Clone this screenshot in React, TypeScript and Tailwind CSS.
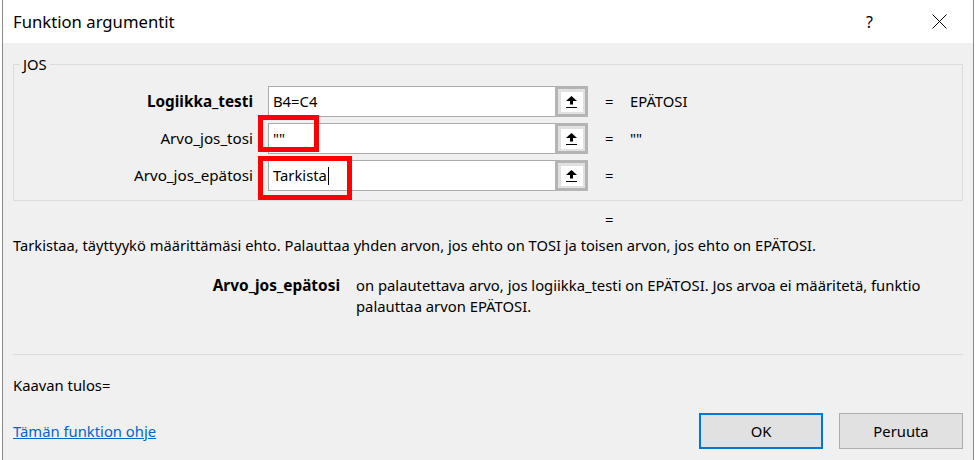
import React from "react";

const RefIcon = () => (
  <svg width="11" height="12" viewBox="0 0 11 12" aria-hidden="true">
    <path d="M5.5 0 L11 5 L0 5 Z" fill="#000" />
    <rect x="4" y="5" width="3" height="3.5" fill="#000" />
    <rect x="0" y="11" width="11" height="1" fill="#000" />
  </svg>
);

const RefButton = () => (
  <div className="w-[33px] h-[31px] border-[3px] border-[#b4b4b4] bg-[#e1e1e1] flex items-center justify-center shrink-0">
    <div className="w-[22px] h-[20px] bg-white flex items-center justify-center">
      <RefIcon />
    </div>
  </div>
);

type ArgRowProps = {
  label: string;
  value: React.ReactNode;
  result?: string;
  bold?: boolean;
};

const ArgRow = ({ label, value, result, bold }: ArgRowProps) => (
  <div className="flex items-center h-[31px]">
    <div className={`w-[239px] text-right whitespace-nowrap ${bold ? "font-bold text-[15.3px]" : "text-[15.2px]"}`}>{label}</div>
    <div className="ml-[15px] w-[287px] h-[31px] bg-white border border-r-0 border-[#ababab] flex items-center pl-[4px] text-[14.8px]">
      {value}
    </div>
    <RefButton />
    <div className="ml-[17px] w-[25px] text-[14.8px]">=</div>
    <div className="text-[14.8px]">{result}</div>
  </div>
);

export default function App() {
  return (
    <div className="w-[977px] h-[460px] bg-white overflow-hidden font-['Noto_Sans',sans-serif] text-black">
      <div className="relative ml-[2px] w-[972px] h-[460px] border-x border-[#8a8a8a] flex flex-col">
        {/* title bar */}
        <div className="h-[43px] bg-white flex items-center pl-[10px] shrink-0">
          <span className="text-[16.7px]">Funktion argumentit</span>
          <span className="ml-auto text-[16px] mr-[59px]">?</span>
          <svg width="15" height="15" viewBox="0 0 15 15" className="mr-[26px]" aria-hidden="true">
            <path d="M0.5 0.5 L14.5 14.5 M14.5 0.5 L0.5 14.5" stroke="#000" strokeWidth="1" />
          </svg>
        </div>

        {/* dialog body */}
        <div className="flex-1 bg-[#f0f0f0] flex flex-col">
          <div className="px-[10px] pt-[21px]">
            <div className="relative h-[137px] border border-[#dcdcdc] pt-[21px] flex flex-col gap-[6px]">
              <span className="absolute -top-[11px] left-[6px] px-[3px] bg-[#f0f0f0] leading-[20px] text-[14.8px]">JOS</span>
              <ArgRow label="Logiikka_testi" bold value="B4=C4" result="EPÄTOSI" />
              <ArgRow label="Arvo_jos_tosi" value={'""'} result={'""'} />
              <ArgRow
                label="Arvo_jos_epätosi"
                value={
                  <span className="flex items-center">
                    Tarkista
                    <span className="inline-block w-[1px] h-[18px] bg-black ml-[1px]" />
                  </span>
                }
              />
            </div>
          </div>

          <div className="mt-[8px] h-[20px] leading-[20px] pl-[602px] text-[14.8px]">=</div>

          <div className="mt-[6px] h-[20px] leading-[20px] pl-[10px] text-[14.7px] whitespace-nowrap">
            Tarkistaa, täyttyykö määrittämäsi ehto. Palauttaa yhden arvon, jos ehto on TOSI ja toisen arvon, jos ehto on EPÄTOSI.
          </div>

          <div className="mt-[20px] flex leading-[21px]">
            <div className="w-[337px] text-right font-bold text-[15.4px] whitespace-nowrap">Arvo_jos_epätosi</div>
            <div className="ml-[16px] whitespace-nowrap text-[14.8px]">
              on palautettava arvo, jos logiikka_testi on EPÄTOSI. Jos arvoa ei määritetä, funktio
              <br />
              palauttaa arvon EPÄTOSI.
            </div>
          </div>

          <div className="mt-[37px] mx-[10px] h-[1px] bg-[#dadada]" />

          <div className="mt-[20px] h-[20px] leading-[20px] pl-[10px] text-[14.8px]">Kaavan tulos=</div>

          <div className="mt-[18px] flex items-center pl-[10px] pr-[10px]">
            <a href="#" className="text-[14.8px] text-[#0066cc] underline">Tämän funktion ohje</a>
            <button className="ml-auto w-[124px] h-[36px] border-2 border-[#0078d7] bg-[#e1e1e1] text-[14.8px]">OK</button>
            <button className="ml-[16px] w-[124px] h-[36px] border border-[#adadad] bg-[#e1e1e1] text-[14.8px]">Peruuta</button>
          </div>
        </div>

        {/* highlight frames drawn over the argument fields */}
        <div className="absolute left-[255px] top-[115px] w-[61px] h-[37px] border-[5px] border-[#ff0000] pointer-events-none" />
        <div className="absolute left-[255px] top-[156px] w-[94px] h-[44px] border-[5px] border-[#ff0000] pointer-events-none" />
      </div>
    </div>
  );
}
